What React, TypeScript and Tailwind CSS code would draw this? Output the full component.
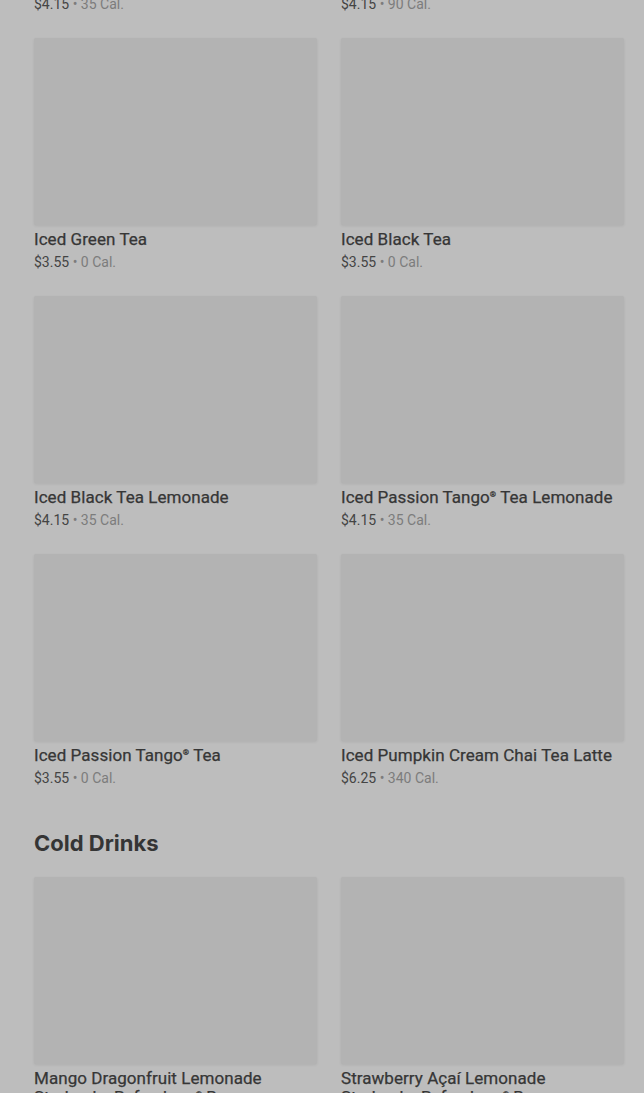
import React from 'react';

type Drink = { name: string; price: string; cal: string; sub?: string };

const teaDrinks: Drink[] = [
  { name: 'Iced Chai Tea Latte', price: '$4.15', cal: '35 Cal.' },
  { name: 'Iced Matcha Tea Latte', price: '$4.15', cal: '90 Cal.' },
  { name: 'Iced Green Tea', price: '$3.55', cal: '0 Cal.' },
  { name: 'Iced Black Tea', price: '$3.55', cal: '0 Cal.' },
  { name: 'Iced Black Tea Lemonade', price: '$4.15', cal: '35 Cal.' },
  { name: 'Iced Passion Tango® Tea Lemonade', price: '$4.15', cal: '35 Cal.' },
  { name: 'Iced Passion Tango® Tea', price: '$3.55', cal: '0 Cal.' },
  { name: 'Iced Pumpkin Cream Chai Tea Latte', price: '$6.25', cal: '340 Cal.' },
];

const coldDrinks: Drink[] = [
  { name: 'Mango Dragonfruit Lemonade', sub: 'Starbucks Refreshers® Beverage', price: '$4.95', cal: '140 Cal.' },
  { name: 'Strawberry Açaí Lemonade', sub: 'Starbucks Refreshers® Beverage', price: '$4.95', cal: '140 Cal.' },
];

// small raised ® like the menu uses
const withReg = (text: string) => {
  const parts = text.split('®');
  return parts.map((p, i) => (
    <React.Fragment key={i}>
      {p}
      {i < parts.length - 1 && <sup className="text-[8px] top-[-0.7em]">®</sup>}
    </React.Fragment>
  ));
};

const DrinkCard: React.FC<{ drink: Drink }> = ({ drink }) => (
  <div className="flex flex-col">
    <div className="h-[187px] w-full rounded-[2px] bg-[#b3b3b3] shadow-[0_1px_3px_rgba(0,0,0,0.08)]" />
    <div className="mt-px text-[17px] leading-[26px] font-normal tracking-[0.05px] text-[#363636] [-webkit-text-stroke:0.25px_#363636]">
      {withReg(drink.name)}
    </div>
    {drink.sub && (
      <div className="-mt-[4px] text-[17px] leading-5 font-normal text-[#363636] [-webkit-text-stroke:0.25px_#363636]">
        {withReg(drink.sub)}
      </div>
    )}
    <div className="text-[14px] leading-5 text-[#444444]">
      {drink.price} <span className="text-[#7c7c7c]">• {drink.cal}</span>
    </div>
  </div>
);

const App: React.FC = () => {
  return (
    <div
      className="h-[1093px] overflow-hidden bg-[#bdbdbd]"
      style={{ fontFamily: 'Roboto, "Liberation Sans", sans-serif' }}
    >
      <div className="mt-[-220px] pl-[34px] pr-[20px]">
        <div className="grid grid-cols-2 gap-x-6 gap-y-6">
          {teaDrinks.map((d, i) => (
            <DrinkCard key={i} drink={d} />
          ))}
        </div>

        <h2
          className="mt-[41px] text-[22px] leading-7 font-bold text-[#353535]"
          style={{ fontFamily: 'Inter, "Liberation Sans", sans-serif' }}
        >
          Cold Drinks
        </h2>

        <div className="mt-5 grid grid-cols-2 gap-x-6 gap-y-6">
          {coldDrinks.map((d, i) => (
            <DrinkCard key={i} drink={d} />
          ))}
        </div>
      </div>
    </div>
  );
};

export default App;
